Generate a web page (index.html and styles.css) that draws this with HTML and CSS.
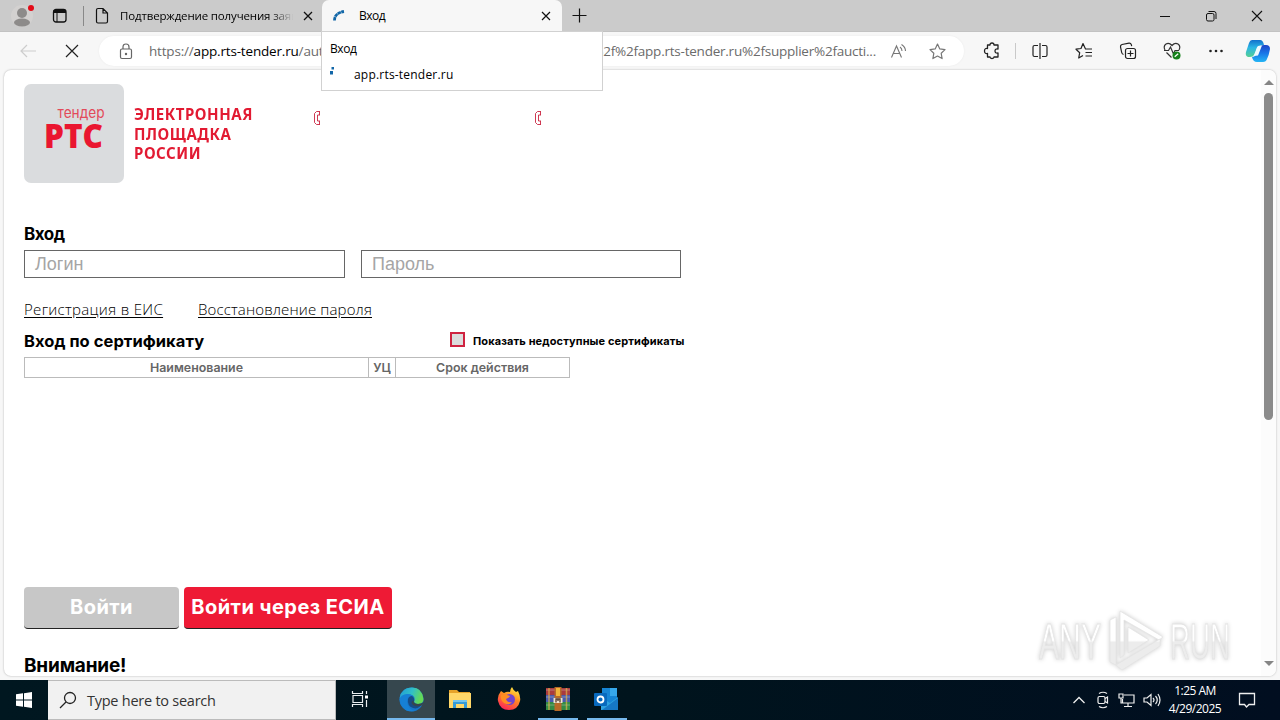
FILE: index.html
```html
<!DOCTYPE html>
<html lang="ru">
<head>
<meta charset="utf-8">
<title>Вход</title>
<link rel="stylesheet" href="styles.css">
</head>
<body>
<div class="desktop">
  <div class="tabbar">
    <svg class="profile" width="28" height="32" viewBox="0 0 28 32"><circle cx="14" cy="16" r="11" fill="#d3d1d0"/><circle cx="14" cy="13" r="5" fill="#8d8b8a"/><ellipse cx="14" cy="22.500" rx="8" ry="4" fill="#8d8b8a"/><circle cx="23" cy="8" r="3" fill="#e30b17"/></svg>
    <svg class="workspaces" width="16" height="16" viewBox="0 0 16 16" fill="none" stroke="#111"><rect x="1.500" y="1.500" width="12.500" height="12.500" rx="2.500" stroke-width="1.300"/><path d="M1.500 3.500h12.500" stroke-width="3"/><path d="M5 4v10"/></svg>
    <i class="tab-sep"></i>
    <div class="tab tab-idle">
      <svg width="14" height="18" viewBox="0 0 14 18" fill="none" stroke="#111" stroke-width="1.200"><path d="M8 1.500H3Q1.500 1.500 1.500 3v11.500Q1.500 16 3 16h8q1.500 0 1.500-1.500V6zV6h4.500"/></svg>
      <span class="tab-title">Подтверждение получения заяв</span>
      <svg class="tab-x" width="10" height="10" viewBox="0 0 10 10" stroke="#111" stroke-width="1.300"><path d="M1 1l8 8M9 1L1 9"/></svg>
    </div>
    <div class="tab tab-active">
      <svg width="14" height="14" viewBox="0 0 14 14" fill="none" stroke="#1267a8" stroke-width="2.800"><path d="M2.500 11.500Q2.500 4 12 2.500" stroke-dasharray="3.500 .4"/></svg>
      <span class="tab-name">Вход</span>
      <svg class="tab-x" width="10" height="10" viewBox="0 0 10 10" stroke="#111" stroke-width="1.200"><path d="M1 1l8 8M9 1L1 9"/></svg>
    </div>
    <svg class="new-tab" width="15" height="15" viewBox="0 0 15 15" stroke="#111" stroke-width="1.200"><path d="M.5 7.500h14M7.500.5v14"/></svg>
    <div class="window-buttons">
      <svg width="12" height="12" viewBox="0 0 12 12" stroke="#111"><path d="M1 6.500h10"/></svg>
      <svg width="12" height="12" viewBox="0 0 12 12" fill="none" stroke="#111"><rect x="1.500" y="3.500" width="7.500" height="7.500" rx="1.500"/><path d="M3.500 1.500H9q2 0 2 2V9"/></svg>
      <svg width="12" height="12" viewBox="0 0 12 12" stroke="#111" stroke-width="1.100"><path d="M1 1l10 10M11 1L1 11"/></svg>
    </div>
  </div>

  <div class="toolbar">
    <svg class="back" width="17" height="14" viewBox="0 0 17 14" fill="none" stroke="#cdcdcd" stroke-width="1.200"><path d="M16 7H1M7 1L1 7l6 6"/></svg>
    <svg class="stop" width="14" height="14" viewBox="0 0 14 14" stroke="#222" stroke-width="1.200"><path d="M1 1l12 12M13 1L1 13"/></svg>
    <div class="address">
      <svg class="lock" width="14" height="17" viewBox="0 0 14 17" fill="none" stroke="#666" stroke-width="1.200"><rect x="1.500" y="6" width="11" height="9.500" rx="1.500"/><path d="M4 6V4q0-3 3-3t3 3v2"/><circle cx="7" cy="11" r=".6" fill="#666"/></svg>
      <span class="url">https://<b>app.rts-tender.ru</b>/aut</span>
      <span class="url url-tail">%2f%2fapp.rts-tender.ru%2fsupplier%2faucti...</span>
      <svg class="read" width="17" height="17" viewBox="0 0 17 17" fill="none" stroke="#777" stroke-width="1.100"><path d="M1.500 14.500L6.500 3l5 11.500M3.500 10.500h6M10 4q2 1.500 2 4M11.500 1.500q4 2.500 4 6.500"/></svg>
      <svg class="star" width="17" height="17" viewBox="0 0 17 17" fill="none" stroke="#777" stroke-width="1.200" stroke-linejoin="round"><path d="M8.500 1l2.300 4.900 5.200.7-3.800 3.700.9 5.300-4.600-2.600-4.600 2.600.9-5.300L1 6.600l5.200-.7z"/></svg>
    </div>
    <div class="tools">
      <svg class="ext" width="18" height="18" viewBox="0 0 18 18" fill="none" stroke="#222" stroke-width="1.300" stroke-linejoin="round"><path d="M4.500 3H7q0-2 2-2t2 2h4v4q-3-.5-3 2t3 2v4H11q0 1.500-2 1.500T7 15H4.500v-3.500Q1.500 12 1.500 9t3-2.500z"/></svg>
      <i class="tool-sep"></i>
      <svg class="split" width="18" height="18" viewBox="0 0 18 18" fill="none" stroke="#222" stroke-width="1.200"><path d="M7 3.500H3.500Q2 3.500 2 5v8q0 1.500 1.500 1.500H7M11 3.500h3.500Q16 3.500 16 5v8q0 1.500-1.500 1.500H11M9 1v16"/></svg>
      <svg class="favs" width="18" height="18" viewBox="0 0 18 18" fill="none" stroke="#222" stroke-width="1.200" stroke-linejoin="round"><path d="M17 7h-6.500L8 1.500 6 6.500l-5 .7 3.700 3.500-1 5.300L8 13.500M10.500 10.500H17M10.500 14H17"/></svg>
      <svg class="coll" width="18" height="18" viewBox="0 0 18 18" fill="none" stroke="#222" stroke-width="1.200"><rect x="6.500" y="6.500" width="10" height="10" rx="2"/><path d="M11.500 8.500v6M8.500 11.500h6M4.500 12.500Q3 12 2.700 10.500L1.500 5Q1.200 3 3 2.500l7-1.300q1.800-.2 2.300 1.500l.4 1.500"/></svg>
      <svg class="heart" width="18" height="18" viewBox="0 0 18 18" fill="none" stroke="#333" stroke-width="1.200"><path d="M2 8Q0 4 3 2t6 1.500Q12 0 15 2t1 6M3.500 10.500l5 5M1 8.500h4.500L7.500 5l3 7 1.500-3.500h4"/><circle cx="13.500" cy="13.500" r="4" fill="#16811b" stroke="none"/><path d="M11.700 14.800l3.500-3" stroke="#fff"/></svg>
      <svg class="more" width="18" height="18" viewBox="0 0 18 18" fill="#222"><circle cx="3.500" cy="9" r="1.300"/><circle cx="9" cy="9" r="1.300"/><circle cx="14.500" cy="9" r="1.300"/></svg>
      <svg class="copilot" width="26" height="24" viewBox="0 0 26 24"><defs><linearGradient id="cpa" x1="0" y1="0" x2="0" y2="1"><stop offset="0" stop-color="#1270cc"/><stop offset=".45" stop-color="#2bb6e5"/><stop offset="1" stop-color="#56cf94"/></linearGradient><linearGradient id="cpb" x1="0" y1="0" x2="0" y2="1"><stop offset="0" stop-color="#1d43c8"/><stop offset=".5" stop-color="#1878e8"/><stop offset="1" stop-color="#24b5f4"/></linearGradient></defs><path d="M7 1h8q3 0 4 5l-5 1q-2 0-3 4l-2 5q-1 2-4 2H3q-3-1-2-5L4 4q1-3 3-3z" fill="url(#cpa)"/><path d="M19 6h2q4 0 4 4-1 6-3 10-1 3-4 3h-6q-4 0-5-5 3 0 4-3l4-7q1-2 4-2z" fill="url(#cpb)"/><path d="M13 7l4-.5-4 10-4 .5z" fill="#eefaff"/></svg>
    </div>
  </div>

  <div class="page-frame">
    <div class="content">
      <div class="brand">
        <svg width="100" height="100" viewBox="0 0 100 100"><rect width="100" height="99" rx="7" fill="#dadcde"/><text x="33.500" y="34" class="logo-small" textLength="47" lengthAdjust="spacingAndGlyphs">тендер</text><text x="20" y="63.500" class="logo-big" textLength="59" lengthAdjust="spacingAndGlyphs">РТС</text></svg>
        <div class="slogan"><span>ЭЛЕКТРОННАЯ</span><span>ПЛОЩАДКА</span><span>РОССИИ</span></div>
        <svg class="phone phone-first" width="7" height="16" viewBox="0 0 7 16" fill="none" stroke="#c9243f"><path d="M7 1.500H3.500L1.500 3.500v9l2 2H7M7 5H4.500v6H7M6.500 1.500V5M6.500 11v3.500" stroke-width=".9"/></svg>
        <svg class="phone" width="7" height="16" viewBox="0 0 7 16" fill="none" stroke="#c9243f"><path d="M7 1.500H3.500L1.500 3.500v9l2 2H7M7 5H4.500v6H7M6.500 1.500V5M6.500 11v3.500" stroke-width=".9"/></svg>
      </div>
      <h2 class="h-login">Вход</h2>
      <div class="fields"><div class="field">Логин</div><div class="field">Пароль</div></div>
      <div class="links"><a class="link-reg">Регистрация в ЕИС</a><a class="link-pass">Восстановление пароля</a></div>
      <div class="cert-row"><h2 class="h-cert">Вход по сертификату</h2><i class="check"></i><span class="check-label">Показать недоступные сертификаты</span></div>
      <div class="cert-table"><span>Наименование</span><span>УЦ</span><span>Срок действия</span></div>
      <div class="buttons"><div class="btn btn-grey">Войти</div><div class="btn btn-red">Войти через ЕСИА</div></div>
      <h2 class="h-note">Внимание!</h2>
    </div>
    <div class="scroll"><i class="up"></i><i class="thumb"></i><i class="down"></i></div>
  </div>

  <div class="taskbar">
    <div class="start"><svg width="16" height="16" viewBox="0 0 16 16" fill="#fff"><path d="M0 2.300L7 1.300v6.200H0zM8 1.200L16 0v7.500H8zM0 8.500h7v6.200l-7-1zM8 8.500h8V16l-8-1.200z"/></svg></div>
    <div class="search"><svg width="18" height="18" viewBox="0 0 18 18" fill="none" stroke="#222" stroke-width="1.300"><circle cx="11" cy="7" r="5.500"/><path d="M7 11L1 17"/></svg><span>Type here to search</span></div>
    <div class="app app-view"><svg width="18" height="18" viewBox="0 0 18 18" fill="none" stroke="#e9edef" stroke-width="1.200"><path d="M1.500 1v2.500h10V1M1.500 17v-2.500h10V17M2 5.500h9.500v7H2zM15.500 1v3M15.500 10v7"/><path d="M14 5.500h3v3h-3z" fill="#fff" stroke="none"/></svg></div>
    <div class="app app-active"><svg width="25" height="25" viewBox="0 0 25 25"><defs><linearGradient id="ea" x1="0" y1="0" x2="1" y2=".3"><stop offset="0" stop-color="#209bd8"/><stop offset=".55" stop-color="#31bfc7"/><stop offset="1" stop-color="#65d955"/></linearGradient></defs><circle cx="12.500" cy="12.500" r="12" fill="#1676c9"/><path d="M.7 11Q2 1 12.500.5T24.500 12q0 5-5.500 5-4 0-4-2 2-5-2-7Q7 5.500 2 11z" fill="url(#ea)"/><path d="M.5 12Q2 7.500 8 7q4 0 6 2-6 0-6 6 1 7 8 9Q6 26 1.500 17z" fill="#1680d5"/><path d="M9 12q1-3 4-3 3 2 2 6 1 2 4 2 3 0 4.500-1.500Q20 23 14 21 8 19 9 12z" fill="#174c87"/><path d="M14.500 13q-1 4 4.500 4 4 0 5.500-2l-1 3q-3 2-7 1t-4-4z" fill="#36464d"/></svg></div>
    <div class="app"><svg width="22" height="20" viewBox="0 0 22 20"><path d="M0 1h8l2 2h11v16H0z" fill="#e6a32a"/><path d="M0 4h22v15H0z" fill="#ffd768"/><path d="M4 11h14v8h-3v-4H7v4H4z" fill="#369bd6"/><path d="M4 11h14v2H4z" fill="#75c5ed"/></svg></div>
    <div class="app"><svg width="24" height="24" viewBox="0 0 24 24"><defs><linearGradient id="fa" x1=".8" y1="0" x2=".3" y2="1"><stop offset="0" stop-color="#fff044"/><stop offset=".45" stop-color="#ff8b22"/><stop offset="1" stop-color="#fb2458"/></linearGradient></defs><path d="M4 4l3 2q3-2 6-1 0-3 2-5 1 3 4 5l2-1q3 6 2 10-2 9-11 9T1 14Q0 9 4 4z" fill="url(#fa)"/><circle cx="12.500" cy="12.500" r="5.500" fill="#7144cf"/><path d="M4 8q3-1 6 0l3 1q-1 2-4 3 1 4 6 3-3 4-8 1-4-3-3-8z" fill="#ff8d22"/></svg></div>
    <div class="app app-run"><svg width="24" height="24" viewBox="0 0 24 24"><path d="M0 1h24v7H0z" fill="#a83b3f"/><path d="M0 8h24v7H0z" fill="#475bac"/><path d="M0 15h24v8H0z" fill="#328b45"/><path d="M0 3h24M0 10h24M0 18h24" stroke="#ded5c9" stroke-width="1" opacity=".4"/><path d="M3 1v22M20.500 1v22" stroke="#e2b348" stroke-width="1.500" opacity=".7"/><path d="M8.500 0h7v24h-7z" fill="#b76a28"/><path d="M10 1h4v8h-4z" fill="#f1b43a"/><path d="M7.500 11h9v5h-9z" fill="#eee3cf"/><path d="M10 15.500V12h4v3.500M12 12v2" fill="none" stroke="#563e30" stroke-width="1.300"/></svg></div>
    <div class="app app-run"><svg width="25" height="24" viewBox="0 0 25 24"><path d="M8 1h15v15H8z" fill="#1685d5"/><path d="M16 1h7v8h-7z" fill="#36a8eb"/><path d="M7 10l9 6 8-6v13H7z" fill="#2fa2df"/><path d="M8 23l16-12v12z" fill="#1678c5"/><rect y="6" width="13" height="13" rx="1" fill="#0869bd"/><circle cx="6.500" cy="12.500" r="3" fill="none" stroke="#fff" stroke-width="1.800"/></svg></div>
    <div class="tray">
      <svg width="14" height="20" viewBox="0 0 14 20" fill="none" stroke="#eee" stroke-width="1.300"><path d="M1.500 13L7 7.500l5.500 5.500"/></svg>
      <svg width="14" height="20" viewBox="0 0 14 20" fill="none" stroke="#eee" stroke-width="1.200"><rect x="2" y="6.500" width="7" height="7" rx="1.500"/><path d="M9 8.500l2.500-1.500v6L9 11.500M3 3.500q4-2.500 8 0M3 16.500q4 2.500 8 0"/></svg>
      <svg width="17" height="20" viewBox="0 0 17 20" fill="none" stroke="#eee" stroke-width="1.200"><path d="M6 5h10v8H4.500V9M10 13v3.500M6 16.500h8M1 4h4v4H1zM3 8v5h2"/></svg>
      <svg width="18" height="20" viewBox="0 0 18 20" fill="none" stroke="#eee" stroke-width="1.200"><path d="M1 8v4h3l4 3.500v-11L4 8zM10 8q2 2 0 4M12.500 6q3.500 4 0 8M15 4q4 6 0 12"/></svg>
      <div class="clock"><span>1:25 AM</span><span>4/29/2025</span></div>
      <svg class="notice" width="18" height="18" viewBox="0 0 18 18" fill="none" stroke="#eee" stroke-width="1.300"><path d="M1.500 2.500h15v11H11L8.500 16l-2-2.500h-5z"/></svg>
    </div>
  </div>

  <div class="tooltip"><span class="tip-title">Вход</span><div class="tip-line"><svg width="6" height="10" viewBox="0 0 6 10" fill="#1267a8"><rect x="1.500" y="0" width="2.500" height="2.500"/><rect x="0" y="4" width="3" height="3.500"/></svg><span>app.rts-tender.ru</span></div></div>
  <svg class="watermark" width="204" height="70" viewBox="0 0 204 70"><defs><linearGradient id="wm" gradientUnits="userSpaceOnUse" x1="0" y1="0" x2="0" y2="70"><stop offset=".49" stop-color="#fff"/><stop offset=".52" stop-color="#ececec"/></linearGradient></defs><g class="mark-shape" fill="url(#wm)"><text x="5" y="53" textLength="62" lengthAdjust="spacingAndGlyphs">ANY</text><text x="136" y="53" textLength="60" lengthAdjust="spacingAndGlyphs">RUN</text><path d="M76 14l6-3v48l-6-3zM86 5l43 26-4 3-35-20v35l-4 3zM94 21l21 13-21 13zM82 59l44-26v7L88 64z"/></g></svg>
</div>
</body>
</html>
```
FILE: styles.css
```css
* { box-sizing: border-box; }
body { margin: 0; width: 1280px; height: 720px; overflow: hidden; font-family: "Open Sans", "Noto Sans", sans-serif; color: #000; }
svg, i { display: block; flex: none; }
h2 { margin: 0; white-space: nowrap; font-family: Inter, sans-serif; font-weight: 700; }
.desktop { position: relative; width: 1280px; height: 720px; display: flex; flex-direction: column; background: #f7f7f7; }

.tabbar { height: 32px; flex: none; display: flex; align-items: center; background: #cbcbcb; border-bottom: 1px solid #c2c2c2; }
.profile { margin-left: 8px; }
.workspaces { margin-left: 16px; }
.tab-sep { width: 1px; height: 20px; margin-left: 15px; background: #888; }
.tab { display: flex; align-items: center; height: 32px; font-size: 12px; }
.tab-idle { width: 238px; padding-left: 11px; }
.tab-title { width: 175px; margin-left: 11px; white-space: nowrap; font-size: 11.500px; letter-spacing: -.15px; mask-image: linear-gradient(90deg, #000 86%, transparent 99%); }
.tab-idle .tab-x { margin-left: 8px; }
.tab-active { width: 240px; padding: 0 11px 0 10px; background: #f7f7f7; border-radius: 7px 7px 0 0; }
.tab-name { margin-left: 13px; font-size: 12px; letter-spacing: -.5px; }
.tab-active .tab-x { margin-left: auto; width: 10px; }
.new-tab { margin-left: 10px; }
.window-buttons { margin-left: auto; margin-right: 17px; display: flex; gap: 34px; }

.toolbar { height: 38px; flex: none; display: flex; align-items: center; background: #f7f7f7; }
.back { margin-left: 20px; }
.stop { margin-left: 28px; }
.address { display: flex; align-items: center; width: 865px; height: 30px; margin-left: 20px; padding-left: 20px; border-radius: 15px; background: #fff; box-shadow: 0 0 2px #e9e9e9; }
.url { margin-left: 16px; white-space: nowrap; font-size: 13.500px; letter-spacing: -.18px; color: #6b6b6b; }
.url b { color: #000; font-weight: 400; }
.url-tail { margin-left: auto; letter-spacing: -.23px; }
.read { margin-left: 14px; }
.star { margin-left: 22px; margin-right: 18px; }
.tools { display: flex; align-items: center; width: 316px; }
.ext { margin-left: 19px; }
.tool-sep { width: 1px; height: 16px; margin-left: 14px; background: #c9c9c9; }
.split { margin-left: 15px; }
.favs { margin-left: 26px; }
.coll { margin-left: 26px; }
.heart { margin-left: 26px; }
.more { margin-left: 26px; }
.copilot { margin-left: 20px; }

.page-frame { display: flex; width: 1272px; height: 606px; margin: 0 4px; overflow: hidden; background: #fff; border-radius: 7px; box-shadow: 0 0 2px #aaa; flex: none; }
.content { width: 1257px; padding: 14px 0 0 20px; }
.brand { display: flex; height: 100px; }
.logo-small { font: 15px Inter, sans-serif; fill: #e34a5a; }
.logo-big { font: 800 34px "Open Sans", sans-serif; fill: #ea1630; }
.slogan { display: flex; flex-direction: column; width: 180px; padding-top: 20px; margin-left: 10px; color: #e21a32; font: 700 16.500px/19.500px "Noto Sans", sans-serif; letter-spacing: .6px; transform: scaleX(.91); transform-origin: left; }
.phone { margin-top: 26px; margin-left: 214px; }
.phone-first { margin-left: -1px; }
.h-login { height: 24px; margin-top: 42px; font-size: 17px; line-height: 17px; letter-spacing: -.5px; }
.fields { display: flex; gap: 16px; }
.field { width: 321px; height: 28px; padding-left: 10px; border: 1px solid #666; font: 18px/26px "Liberation Sans", sans-serif; color: #a5a5a5; }
.field + .field { width: 320px; }
.links { display: flex; margin-top: 21px; height: 20px; gap: 35px; font: 300 15px/20px "Open Sans", sans-serif; }
.links a { text-decoration: underline; text-underline-offset: 2px; white-space: nowrap; }
.link-reg { width: 139px; letter-spacing: .32px; }
.link-pass { letter-spacing: .14px; }
.cert-row { display: flex; height: 26px; margin-top: 12px; }
.h-cert { width: 426px; font-size: 16.500px; line-height: 20px; letter-spacing: .05px; }
.check { width: 15px; height: 15px; margin-top: 1px; border: 2px solid #cf2340; background: #dcdcdc; }
.check-label { margin-left: 8px; font: 700 11px/21px Inter, sans-serif; letter-spacing: .11px; white-space: nowrap; }
.cert-table { display: grid; grid-template-columns: 343px 27px 174px; width: 546px; height: 21px; border: 1px solid #bbb; color: #666; font: 600 12.400px/19px Inter, sans-serif; text-align: center; }
.cert-table span + span { border-left: 1px solid #bbb; }
.buttons { display: flex; gap: 5px; margin-top: 209px; }
.btn { height: 42px; border-radius: 4px; border-bottom: 1px solid #222; color: #fff; font: 700 20px/40px Inter, sans-serif; letter-spacing: .45px; text-align: center; white-space: nowrap; }
.btn-grey { width: 155px; background: #c7c7c7; }
.btn-red { width: 208px; background: #ee1a35; }
.h-note { margin-top: 25px; font-size: 19px; line-height: 24px; letter-spacing: -.2px; }
.scroll { width: 15px; padding-top: 10px; background: #fcfcfc; display: flex; flex-direction: column; align-items: center; }
.up { border: 5px solid transparent; border-top: 0; border-bottom: 5px solid #858585; }
.thumb { width: 9px; height: 327px; margin-top: 8px; border-radius: 5px; background: #8b8b8b; }
.down { margin-top: 241px; border: 5px solid transparent; border-bottom: 0; border-top: 5px solid #858585; }

.taskbar { display: flex; height: 40px; margin-top: 4px; flex: none; background: linear-gradient(90deg, #001720, #00141d 50%, #010e20); }
.start { display: flex; align-items: center; justify-content: center; width: 48px; }
.search { display: flex; align-items: center; width: 288px; padding-left: 11px; gap: 10px; background: #f1f1f1; border: 1px solid #bbb; border-left: 0; color: #333; font-size: 14.500px; letter-spacing: -.25px; }
.app { display: flex; align-items: center; justify-content: center; width: 49px; border-bottom: 2px solid transparent; }
.app-view { width: 51px; padding-right: 4px; }
.app-active { width: 48px; background: #36474e; border-bottom-color: #76b9ed; }
.app-run { background: linear-gradient(#76b9ed, #76b9ed) center bottom / 40px 2px no-repeat; background-origin: border-box; }
.tray { display: flex; align-items: center; margin-left: auto; margin-right: 24px; color: #fff; gap: 8px; }
.tray svg:first-child { margin-right: 2px; }
.clock { display: flex; flex-direction: column; align-items: center; width: 56px; margin-left: -2px; font: 12px/18px "Open Sans", sans-serif; letter-spacing: -.5px; white-space: nowrap; }
.notice { margin-left: 7px; }

.tooltip { position: absolute; left: 321px; top: 31px; width: 282px; height: 60px; padding: 8px; border: 1px solid #d1d1d1; background: #fff; font-size: 12px; line-height: 17px; letter-spacing: .2px; }
.tip-title { display: block; letter-spacing: -.4px; }
.tip-line { display: flex; align-items: center; gap: 18px; margin-top: 9px; }
.tip-line svg { margin-bottom: 5px; }
.watermark { position: absolute; left: 1034px; top: 606px; }
.mark-shape { stroke: #e4e4e4; stroke-width: .8; filter: drop-shadow(0 0 2px #ccc); font: 400 50px "Liberation Sans", sans-serif; }
```
